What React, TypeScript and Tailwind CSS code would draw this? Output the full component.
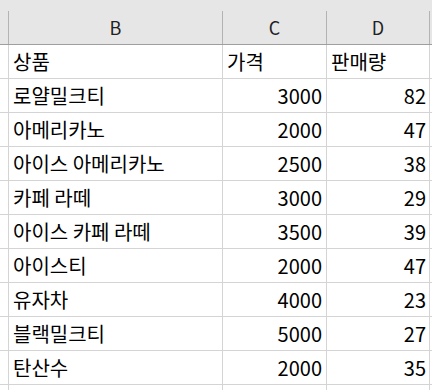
const rows: [string, string, string][] = [
  ["로얄밀크티", "3000", "82"],
  ["아메리카노", "2000", "47"],
  ["아이스 아메리카노", "2500", "38"],
  ["카페 라떼", "3000", "29"],
  ["아이스 카페 라떼", "3500", "39"],
  ["아이스티", "2000", "47"],
  ["유자차", "4000", "23"],
  ["블랙밀크티", "5000", "27"],
  ["탄산수", "2000", "35"],
]

const cols = "grid grid-cols-[9px_214px_104px_103px_2px]"
const cell = "h-[34px] border-b border-r border-[#d4d4d4] flex items-center"

export default function App() {
  return (
    <div
      className="w-[432px] h-[390px] overflow-hidden bg-white text-black"
      style={{ fontFamily: '"Noto Sans CJK KR", "Noto Sans", sans-serif' }}
    >
      <div className="h-[11px] bg-[#e6e6e6]" />
      <div className={`${cols} h-[34px] bg-[#e6e6e6] border-b border-[#9e9e9e] text-[18px] text-[#222]`}>
        <div className="border-r border-[#b3b3b3]" />
        <div className="border-r border-[#b3b3b3] flex items-center justify-center">B</div>
        <div className="border-r border-[#b3b3b3] flex items-center justify-center">C</div>
        <div className="border-r border-[#b3b3b3] flex items-center justify-center">D</div>
        <div />
      </div>
      <div className={`${cols} text-[20px] leading-none`}>
        <div className={cell} />
        <div className={`${cell} pl-[4px]`}>상품</div>
        <div className={`${cell} pl-[4px]`}>가격</div>
        <div className={`${cell} pl-[4px]`}>판매량</div>
        <div className="border-b border-[#d4d4d4]" />
        {rows.map(([name, price, qty]) => (
          <div key={name} className="contents">
            <div className={cell} />
            <div className={`${cell} pl-[4px]`}>{name}</div>
            <div className={`${cell} justify-end pr-[4px]`}>{price}</div>
            <div className={`${cell} justify-end pr-[3px]`}>{qty}</div>
            <div className="border-b border-[#d4d4d4]" />
          </div>
        ))}
        <div className={cell} />
        <div className={cell} />
        <div className={cell} />
        <div className={cell} />
        <div />
      </div>
    </div>
  )
}
